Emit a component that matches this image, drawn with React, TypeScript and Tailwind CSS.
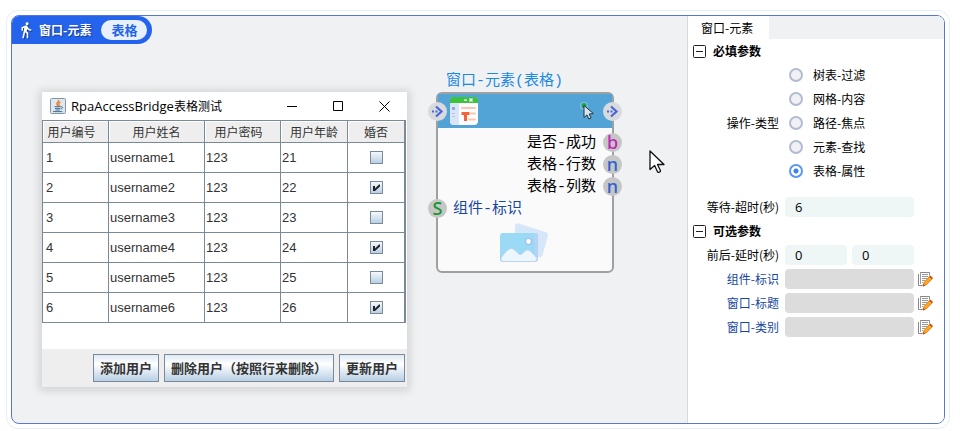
import React, { useState } from 'react';
import { MdDirectionsWalk } from 'react-icons/md';

const users = [
  { id: 1, name: 'username1', password: '123', age: 21, married: false },
  { id: 2, name: 'username2', password: '123', age: 22, married: true },
  { id: 3, name: 'username3', password: '123', age: 23, married: false },
  { id: 4, name: 'username4', password: '123', age: 24, married: true },
  { id: 5, name: 'username5', password: '123', age: 25, married: false },
  { id: 6, name: 'username6', password: '123', age: 26, married: true },
];

const columns = [
  { label: '用户编号', className: 'w-[66px] pr-2' },
  { label: '用户姓名', className: 'w-[96px]' },
  { label: '用户密码', className: 'w-[76px] pr-2' },
  { label: '用户年龄', className: 'w-[67px]' },
  { label: '婚否', className: 'w-[58px]' },
];

const outputs = [
  { label: '是否-成功', port: 'b', color: 'text-[#c026b8]' },
  { label: '表格-行数', port: 'n', color: 'text-[#2f5fd0]' },
  { label: '表格-列数', port: 'n', color: 'text-[#2f5fd0]' },
];

const modes = ['树表-过滤', '网格-内容', '路径-焦点', '元素-查找', '表格-属性'];

const pickers = ['组件-标识', '窗口-标题', '窗口-类别'];

const JavaIcon = () => (
  <svg width="16" height="16" viewBox="0 0 16 16">
    <rect x="0.5" y="0.5" width="15" height="15" rx="1" fill="#dfe6ec" stroke="#8097ab" />
    <path d="M8.600 2c.8 1.600-2.600 2.600-1.600 4.400.3.600.7 1 .8 1.600M10.400 4.200c-1.400.6-2.200 1.200-1.400 2.200.5.600.2 1.200-.4 1.700" fill="none" stroke="#e87722" strokeWidth="1.300" />
    <path d="M4.600 8.700h6.200M5 10.400h5.400M5.400 12h4.400M3 13.600h9.400M11 8.800c2-.5 2.200 1.600-.2 2.200" fill="none" stroke="#476f94" strokeWidth="1" />
  </svg>
);

const FormIcon = () => (
  <svg width="28" height="28" viewBox="0 0 28 28">
    <rect width="28" height="28" rx="4" fill="#fdfdfd" />
    <path d="M0 6V3a3 3 0 0 1 3-3h22a3 3 0 0 1 3 3v3z" fill="#3cc23c" />
    <path d="M0 6h9v22H4a4 4 0 0 1-4-4z" fill="#dbe5f8" />
    <path d="M14 3.200h3M19.500 1.500l3 3M22.500 1.500l-3 3" stroke="#fff" strokeWidth="1.300" />
    <path d="M2 10h3v3H2z" fill="#8fa9dc" />
    <path d="M2 16.500h3M2 19.500h3" stroke="#b2c4ea" strokeWidth="1.200" />
    <path d="M12 11h13M21 16.500h4M19 22.500h6" stroke="#fbc5b2" strokeWidth="2" strokeLinecap="round" />
    <path d="M11.500 16.500h8M15.500 16.500V24" stroke="#f2633c" strokeWidth="3" />
  </svg>
);

const PickerIcon = () => (
  <svg width="16" height="20" viewBox="0 0 16 20">
    <circle cx="5" cy="5" r="4" fill="#7cc0e6" />
    <circle cx="5" cy="4.600" r="2.600" fill="#1ea34a" />
    <path d="M5 4.500v12l3-2.600 1.800 4.100 2.300-1-1.900-4 4.200-.4z" fill="#d5e6f3" stroke="#26323d" strokeWidth="1" />
  </svg>
);

const PictureIcon = () => (
  <svg width="50" height="40" viewBox="0 0 50 40">
    <path d="M19.500.8 46 9.200a3 3 0 0 1 2 3.800L42.500 32a3 3 0 0 1-4 2L15 27V4a3 3 0 0 1 4.500-3.200z" fill="#d5e7f8" />
    <rect x="0" y="10" width="38" height="29" rx="3" fill="#9bdaf5" />
    <path d="M34 10h1a3 3 0 0 1 3 3v22a3 3 0 0 1-3 3z" fill="#b5d4f3" />
    <path d="M1 35c3.500-5 7-9.500 10.500-9.500 3.500 0 6 6 9 6 2.500 0 4-4.500 7-4.500s6.500 5 9.500 8.500c0 2-1 3-3 3H4c-2 0-3-1-3-3.500z" fill="#eef6fd" stroke="#b9cff2" strokeWidth="0.800" />
    <circle cx="28.500" cy="18.500" r="3" fill="#fff" stroke="#a3bcec" strokeWidth="1.200" />
  </svg>
);

const PointerIcon = () => (
  <svg width="16" height="24" viewBox="0 0 16 24">
    <path d="M1 1v18.500l4.600-4 3 6.500c.5 1 3.300-.2 2.900-1.300l-3-6.200H15z" fill="#fff" stroke="#111" strokeWidth="1.300" strokeLinejoin="round" />
  </svg>
);

const EditIcon = () => (
  <svg width="15" height="15" viewBox="0 0 15 15">
    <path d="M2.500.5h9v3M.5 2v11.500h4" fill="none" stroke="#888" />
    <path d="M4 2.500h6M4 4.500h6M4 6.500h5M4 8.500h3M4 10.500h1M2.500 0v12" fill="none" stroke="#999" />
    <path d="M6 10.500 12 4l2.500 2.500-6.200 6.300L5 14z" fill="#fba81c" stroke="#e06a10" strokeWidth="0.800" />
    <path d="m11.300 4.700 1.200-1.200 2.300 2.200-1.300 1.400z" fill="#d9480f" />
    <path d="m4.600 14.400.9-2.500 1.700 1.700z" fill="#c2410c" />
  </svg>
);

const FlowPort = () => (
  <span className="flex size-[19px] items-center justify-center rounded-full bg-[#d9dadd]">
    <svg width="13" height="13" viewBox="0 0 13 13">
      <path d="M5 1.500 10.500 6.500 5 11.500" fill="none" stroke="#4a66d8" strokeWidth="2.200" />
      <path d="M1 6.500h2M4.500 6.500h2" stroke="#4a66d8" strokeWidth="2" />
    </svg>
  </span>
);

const ValuePort = ({ letter, color }: { letter: string; color: string }) => (
  <span className={`flex size-[19px] items-center justify-center rounded-full bg-[#c6c6c6] font-['Noto_Sans',sans-serif] text-lg leading-4 font-medium ${color}`}>
    {letter}
  </span>
);

const SwingButton = ({ children }: { children: React.ReactNode }) => (
  <button
    type="button"
    className="h-7 border border-[#7a8a99] bg-linear-to-b from-[#dfe9f3] via-white via-35% to-[#b8cfe5] px-[6px] text-[13px] leading-5 font-bold whitespace-nowrap text-[#333]"
  >
    {children}
  </button>
);

const UserWindow = () => {
  const [rows, setRows] = useState(users);

  const toggle = (id: number) =>
    setRows(rows.map((row) => (row.id === id ? { ...row, married: !row.married } : row)));

  return (
    <section className="mt-5 w-[365px] shrink-0 bg-white shadow-[0_1px_8px_3px_rgba(0,0,0,0.12)]">
      <header className="flex h-7 items-center gap-[5px] pl-2">
        <JavaIcon />
        <h2 className="flex-1 text-xs leading-5 text-black">
          <span className="font-['Open_Sans',sans-serif] text-[13px]">RpaAccessBridge</span>表格测试
        </h2>
        <div className="flex h-full items-center gap-[35px] pr-[17px]">
          <button type="button" aria-label="最小化">
            <svg width="11" height="11" viewBox="0 0 11 11"><path d="M0 5.500h10" stroke="#000" /></svg>
          </button>
          <button type="button" aria-label="最大化">
            <svg width="11" height="11" viewBox="0 0 11 11"><path d="M.5.5h9v9h-9z" fill="none" stroke="#000" /></svg>
          </button>
          <button type="button" aria-label="关闭">
            <svg width="11" height="11" viewBox="0 0 11 11"><path d="m.5.5 10 10m0-10-10 10" stroke="#000" /></svg>
          </button>
        </div>
      </header>

      <table className="w-[364px] table-fixed border-separate border-spacing-0 border-t border-l border-[#7a8a99] text-[#333]">
        <thead>
          <tr className="h-[22px]">
            {columns.map((column) => (
              <th
                key={column.label}
                className={`border-r border-b border-[#7a8a99] bg-[#eeeeee] p-0 text-xs font-normal shadow-[inset_1px_1px_0_#fff] last:border-r-2 ${column.className}`}
              >
                {column.label}
              </th>
            ))}
          </tr>
        </thead>
        <tbody className="font-['Liberation_Sans',sans-serif] text-[13px] leading-4">
          {rows.map((row) => (
            <tr key={row.id} className="h-[30px]">
              <td className="border-r border-b border-[#7a8a99] p-0 pl-[3px]">{row.id}</td>
              <td className="border-r border-b border-[#7a8a99] p-0 pl-px">{row.name}</td>
              <td className="border-r border-b border-[#7a8a99] p-0 pl-px">{row.password}</td>
              <td className="border-r border-b border-[#7a8a99] p-0 pl-px">{row.age}</td>
              <td className="border-r-2 border-b border-[#7a8a99] p-0">
                <label className="relative mx-auto block size-[13px]">
                  <input
                    type="checkbox"
                    aria-label={`婚否 ${row.name}`}
                    checked={row.married}
                    onChange={() => toggle(row.id)}
                    className="block size-[13px] appearance-none border border-[#7a8a99] bg-linear-to-b from-[#f6f9fc] to-[#b8cfe5]"
                  />
                  {row.married && (
                    <svg className="pointer-events-none absolute inset-0" width="13" height="13" viewBox="0 0 13 13">
                      <path d="M3 5h2v2.500L9 3.500h1v2L5 10H3z" fill="#222" />
                    </svg>
                  )}
                </label>
              </td>
            </tr>
          ))}
        </tbody>
      </table>

      <footer className="mt-[26px] flex justify-end gap-[5px] bg-[#eeeeee] px-[2px] py-[5px]">
        <SwingButton>添加用户</SwingButton>
        <SwingButton>删除用户（按照行来删除）</SwingButton>
        <SwingButton>更新用户</SwingButton>
      </footer>
    </section>
  );
};

const FlowNode = () => (
  <section className="ml-[29px] w-[178px] shrink-0 font-['Liberation_Mono','Noto_Sans_CJK_SC',monospace] text-[15px] leading-5">
    <h2 className="pl-[10px] whitespace-nowrap text-[#1b8ae0]">窗口-元素(表格)</h2>
    <div className="rounded-md border-2 border-[#a0a0a0] bg-[#fafafa]">
      <div className="-mx-[10px] flex h-[34px] items-center bg-[linear-gradient(#52a4d6,#52a4d6)] bg-[length:calc(100%-20px)_100%] bg-center bg-no-repeat">
        <FlowPort />
        <span className="ml-[3px]"><FormIcon /></span>
        <span className="mr-2 ml-auto"><PickerIcon /></span>
        <FlowPort />
      </div>
      <ul className="-mr-[10px] pt-[3px]">
        {outputs.map((output) => (
          <li key={output.label} className="flex h-[22px] items-center justify-end gap-[7px] text-black">
            <span className="pt-1">{output.label}</span>
            <ValuePort letter={output.port} color={output.color} />
          </li>
        ))}
      </ul>
      <div className="-ml-[10px] flex h-[22px] items-center gap-[6px] text-[#17479e]">
        <ValuePort letter="S" color="text-[#12962f]" />
        <span className="pt-1">组件-标识</span>
      </div>
      <div className="flex justify-center pt-1 pb-2">
        <PictureIcon />
      </div>
    </div>
  </section>
);

const SectionTitle = ({ children }: { children: React.ReactNode }) => (
  <h3 className="flex h-6 items-center gap-[7px] pl-[5px] font-bold">
    <svg width="13" height="13" viewBox="0 0 13 13">
      <rect x="0.500" y="0.500" width="12" height="12" rx="1" fill="none" stroke="#222" />
      <path d="M3 6.500h7" stroke="#222" />
    </svg>
    {children}
  </h3>
);

const inputStyle = "h-5 min-w-0 flex-1 rounded-sm bg-[#eef7f6] px-[10px] font-['Open_Sans',sans-serif] text-[13px]";

const Properties = () => {
  const [mode, setMode] = useState('表格-属性');

  return (
    <aside className="w-[257px] shrink-0 border-l border-[#d9d9d9] bg-white text-xs text-black">
      <div className="bg-[#f0f1f3]">
        <h2 className="inline-flex h-[23px] items-center bg-white pr-4 pl-[13px] align-top">窗口-元素</h2>
      </div>

      <SectionTitle>必填参数</SectionTitle>
      <fieldset className="flex items-center">
        <span className="w-[91px] text-right">操作-类型</span>
        <div className="ml-[10px]">
          {modes.map((item) => (
            <label key={item} className="flex h-6 items-center gap-[10px]">
              <input
                type="radio"
                name="mode"
                checked={mode === item}
                onChange={() => setMode(item)}
                className="size-[14px] appearance-none rounded-full border-2 border-[#b3bbd1] bg-[#eff1f4] checked:border-[#5b96f5] checked:bg-white checked:bg-[radial-gradient(circle,#3f7ff0_2px,transparent_3px)]"
              />
              {item}
            </label>
          ))}
        </div>
      </fieldset>

      <div className="mt-3 flex h-6 items-center">
        <label htmlFor="timeout" className="w-[91px] text-right">等待-超时(秒)</label>
        <div className="ml-[6px] flex w-[129px]">
          <input id="timeout" defaultValue="6" className={inputStyle} />
        </div>
      </div>

      <SectionTitle>可选参数</SectionTitle>
      <div className="flex h-6 items-center">
        <label htmlFor="delay-before" className="w-[91px] text-right">前后-延时(秒)</label>
        <div className="ml-[6px] flex w-[129px] gap-[5px]">
          <input id="delay-before" defaultValue="0" className={inputStyle} />
          <input aria-label="后延时(秒)" defaultValue="0" className={inputStyle} />
        </div>
      </div>
      {pickers.map((item) => (
        <div key={item} className="flex h-6 items-center">
          <label htmlFor={item} className="w-[91px] text-right text-[#17479e]">{item}</label>
          <input id={item} className="ml-[6px] h-5 w-[129px] rounded-sm bg-[#dcdcdc] px-[10px]" />
          <button type="button" aria-label={`编辑 ${item}`} className="ml-1">
            <EditIcon />
          </button>
        </div>
      ))}
    </aside>
  );
};

export default function App() {
  return (
    <div className="bg-white pt-[10px] pr-[10px] pb-[3px] pl-[6px] font-['Noto_Sans_CJK_SC',sans-serif]">
      <div className="rounded-xl border border-[#e4effd] p-1">
        <main className="flex overflow-hidden rounded-lg border border-[#5b76d0] bg-[#f0f1f3]">
          <div className="min-w-0 flex-1 pb-9">
            <div className="inline-flex h-7 items-center rounded-r-full bg-[#2463eb] pr-[5px] pl-[5px] align-top text-xs font-bold">
              <MdDirectionsWalk className="size-[18px] text-white drop-shadow-[1px_1px_0_#1b3f94]" />
              <h1 className="ml-1 text-white [text-shadow:1px_1px_1px_#1b3f94]">窗口-元素</h1>
              <span className="ml-[10px] rounded-full bg-[#e8f0fb] px-[10px] text-[13px] leading-5 text-[#2463eb]">表格</span>
            </div>
            <div className="mt-7 flex items-start pl-[30px]">
              <UserWindow />
              <FlowNode />
              <span className="mt-[78px] ml-[35px]"><PointerIcon /></span>
            </div>
          </div>
          <Properties />
        </main>
      </div>
    </div>
  );
}
